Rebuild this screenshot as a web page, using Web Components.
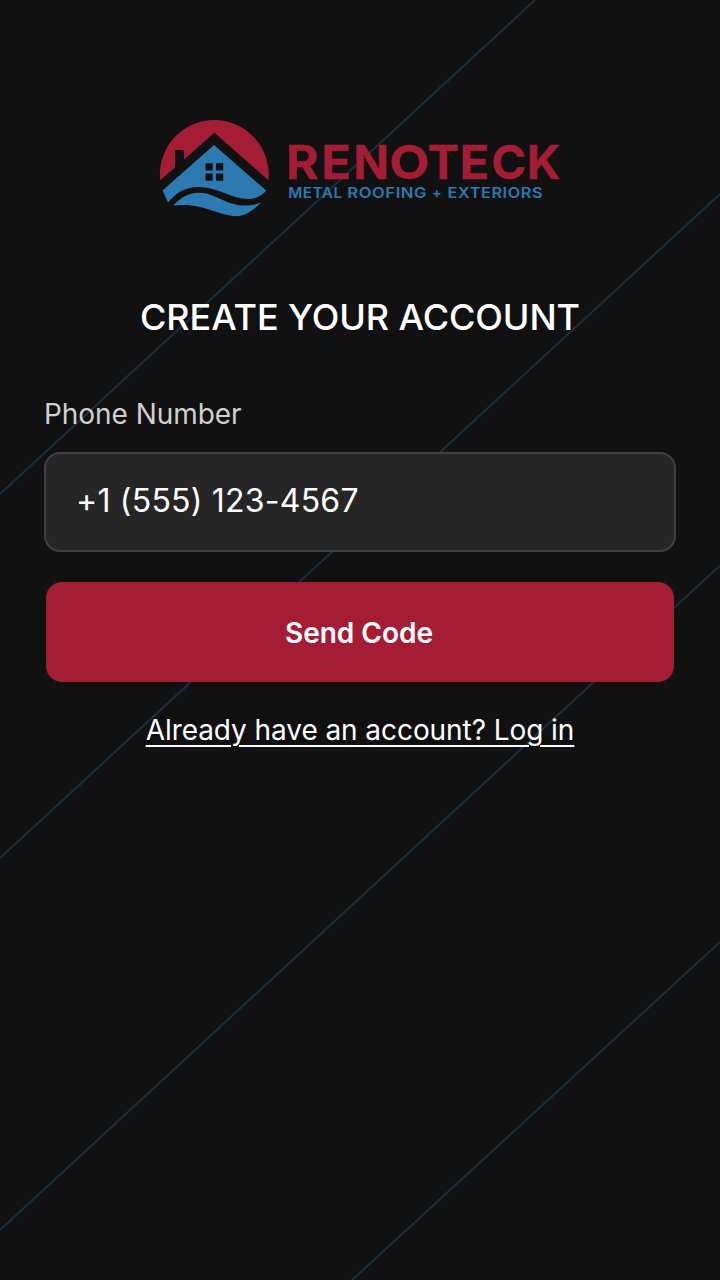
<!DOCTYPE html>
<html lang="en">
<head>
<meta charset="utf-8">
<title>Renoteck – Create your account</title>
<style>body{margin:0;background:#111}</style>
</head>
<body>
<signup-screen>
  <brand-logo></brand-logo>
  <screen-title>CREATE YOUR ACCOUNT</screen-title>
  <phone-field label="Phone Number">+1 (555) 123-4567</phone-field>
  <primary-button>Send Code</primary-button>
  <text-link>Already have an account? Log in</text-link>
</signup-screen>
<script>
const define = (name, html) => customElements.define(name, class extends HTMLElement {
  constructor() {
    super();
    this.attachShadow({mode: 'open'}).innerHTML = html;
  }
  connectedCallback() {
    const label = this.shadowRoot.querySelector('.label');
    if (label) label.textContent = this.getAttribute('label');
  }
});

define('signup-screen', `
<style>
:host{display:grid;width:720px;height:1280px;overflow:hidden;background:#111;color:#fff;font-family:Inter,sans-serif}
.bg,main{grid-area:1/1}
main{z-index:1;display:flex;flex-direction:column;align-items:center;padding:120px 44px 0}
</style>
<svg class="bg" width="720" height="1280" viewBox="0 0 720 1280" fill="none" stroke="#1a2f3f" stroke-width="2">
<path d="M535 0L0 494M720 194L0 858M720 565.500L0 1230M720 942L351 1281"/></svg>
<main><slot></slot></main>`);

define('brand-logo', `
<style>:host{display:block;width:400px;height:96px}svg{display:block;overflow:visible}text{font-family:Inter,sans-serif;font-weight:700}</style>
<svg width="400" height="96" viewBox="160 120 400 96">
<path fill="#a51d35" d="M160.200 180.200A54.400 54.400 0 1 1 268.400 180.200L214.300 132.700L184 159.500V150H175V167.500Z"/>
<path fill="#2d7ab3" fill-rule="evenodd" d="M214 145L266.200 190.600C263 195 256 199 249 199C231 199 218 187 199 187C184 187 175 194 168 202.500L162.500 190.500ZM205.500 163.200V170.400H212.700V163.200ZM216 163.200V170.400H223.200V163.200ZM205.500 173.600V180.800H212.700V173.600ZM216 173.600V180.800H223.200V173.600Z"/>
<path fill="#2d7ab3" d="M173 205.500C181 197.500 188 193 199 192.700C214 192.500 224 204 242 205.500C249 206 255 205 261.500 202.300C253 210 246 216 236 216C218 216 203 202 173 205.500Z"/>
<text fill="#a51d35" stroke="#a51d35" stroke-width=".3" font-size="47" y="179"><tspan x="286" textLength="33" lengthAdjust="spacingAndGlyphs">R</tspan><tspan x="321.300" textLength="29.700" lengthAdjust="spacingAndGlyphs">E</tspan><tspan x="353.300">N</tspan><tspan x="389.300" textLength="40.500" lengthAdjust="spacingAndGlyphs">O</tspan><tspan x="427.500">T</tspan><tspan x="459.500" textLength="29.700" lengthAdjust="spacingAndGlyphs">E</tspan><tspan x="491.300" textLength="35" lengthAdjust="spacingAndGlyphs">C</tspan><tspan x="526.800">K</tspan></text>
<text fill="#2d7ab3" style="font-weight:600;letter-spacing:.5px" font-size="14.300" y="198"><tspan x="288.200" textLength="54.500" lengthAdjust="spacingAndGlyphs">METAL</tspan><tspan x="347.300" textLength="79.700" lengthAdjust="spacingAndGlyphs">ROOFING</tspan><tspan x="432">+</tspan><tspan x="447.600" textLength="95.500" lengthAdjust="spacingAndGlyphs">EXTERIORS</tspan></text>
</svg>`);

define('screen-title', `
<style>:host{display:block;margin-top:79px;font-size:36px;line-height:44px;font-weight:500;letter-spacing:-.08px;white-space:nowrap}</style><slot></slot>`);

define('phone-field', `
<style>
:host{display:block;align-self:stretch;margin-top:57px}
.label{font-size:28px;line-height:36px;letter-spacing:-.05px;color:#d0d0d0}
.box{box-sizing:border-box;height:100px;margin-top:20px;padding:0 30px 4px;display:flex;align-items:center;border:2px solid #404040;border-radius:16px;background:#262626;font-size:32px;letter-spacing:.22px}
</style><div class="label"></div><div class="box"><span><slot></slot></span></div>`);

define('primary-button', `
<style>
:host{display:block;align-self:stretch;margin:30px 2px 0}
button{display:block;width:100%;height:100px;border:0;padding:2px 2px 0 0;border-radius:16px;background:#a51d35;color:#fff;font:600 28px Inter,sans-serif}
</style><button><slot></slot></button>`);

define('text-link', `
<style>
:host{display:block;margin-top:30px;font-size:28px;line-height:36px;letter-spacing:-.07px;white-space:nowrap}
a{color:#fff;text-decoration:underline;text-decoration-thickness:2px;text-underline-offset:5px}
</style><a href="#"><slot></slot></a>`);
</script>
</body>
</html>
